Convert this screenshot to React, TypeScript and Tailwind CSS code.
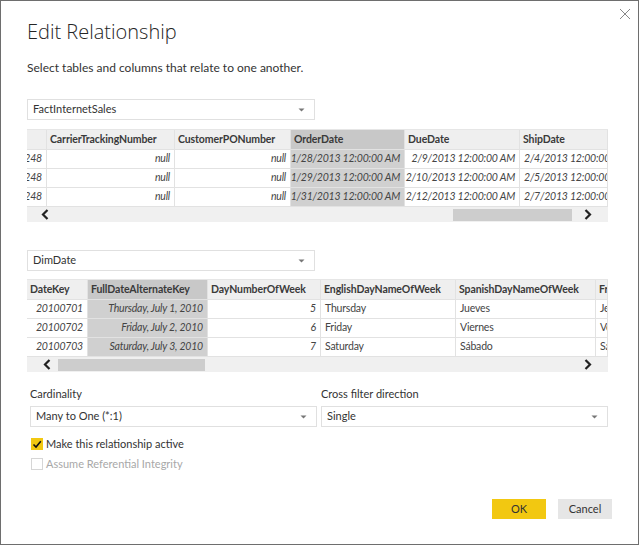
import React from 'react'

const ui = { fontFamily: 'Lato, "Open Sans", sans-serif' }
const titleFont = { fontFamily: '"Open Sans", "Noto Sans", sans-serif' }
const grid = { fontFamily: 'Lato, "Liberation Sans", sans-serif' }

type Col = { name: string; width: number; align: 'left' | 'right'; selected?: boolean }

const factCols: Col[] = [
  { name: '', width: 20, align: 'right' },
  { name: 'CarrierTrackingNumber', width: 128, align: 'right' },
  { name: 'CustomerPONumber', width: 116, align: 'right' },
  { name: 'OrderDate', width: 114, align: 'right', selected: true },
  { name: 'DueDate', width: 115, align: 'right' },
  { name: 'ShipDate', width: 88, align: 'left' },
]

const factRows = [
  ['86.2248', 'null', 'null', '1/28/2013 12:00:00 AM', '2/9/2013 12:00:00 AM', '2/4/2013 12:00:00 AM'],
  ['86.2248', 'null', 'null', '1/29/2013 12:00:00 AM', '2/10/2013 12:00:00 AM', '2/5/2013 12:00:00 AM'],
  ['86.2248', 'null', 'null', '1/31/2013 12:00:00 AM', '2/12/2013 12:00:00 AM', '2/7/2013 12:00:00 AM'],
]

const dateCols: Col[] = [
  { name: 'DateKey', width: 61, align: 'right' },
  { name: 'FullDateAlternateKey', width: 120, align: 'right', selected: true },
  { name: 'DayNumberOfWeek', width: 113, align: 'right' },
  { name: 'EnglishDayNameOfWeek', width: 135, align: 'left' },
  { name: 'SpanishDayNameOfWeek', width: 140, align: 'left' },
  { name: 'FrenchDayNameOfWeek', width: 12, align: 'left' },
]

const dateRows = [
  ['20100701', 'Thursday, July 1, 2010', '5', 'Thursday', 'Jueves', 'Jeudi'],
  ['20100702', 'Friday, July 2, 2010', '6', 'Friday', 'Viernes', 'Vendredi'],
  ['20100703', 'Saturday, July 3, 2010', '7', 'Saturday', 'Sábado', 'Samedi'],
]

// italic = numbers / dates (typed values), plain = text columns
const italicCols = { fact: [true, true, true, true, true, true], date: [true, true, true, false, false, false] }

const Caret = () => (
  <svg width="7" height="4" viewBox="0 0 7 4">
    <path d="M0.5 0.5 L6.5 0.5 L3.5 3.5 Z" fill="#777" />
  </svg>
)

const Chevron = ({ dir }: { dir: 'left' | 'right' }) => (
  <svg width="8" height="11" viewBox="0 0 8 11">
    <path
      d={dir === 'left' ? 'M6.5 1 L2 5.5 L6.5 10' : 'M1.5 1 L6 5.5 L1.5 10'}
      fill="none"
      stroke="#222"
      strokeWidth="2.2"
    />
  </svg>
)

const Dropdown = ({ value, width }: { value: string; width: number }) => (
  <div
    className="h-[21px] border border-[#e0e0e0] bg-white flex items-center justify-between pl-[5px] pr-[9px] text-[11px] text-[#333]"
    style={{ width }}
  >
    <span>{value}</span>
    <Caret />
  </div>
)

const Preview = ({
  cols,
  rows,
  italics,
  thumb,
  leftArrow,
}: {
  cols: Col[]
  rows: string[][]
  italics: boolean[]
  thumb: [number, number]
  leftArrow: number
}) => (
  <div className="w-[581px] border-t border-[#e6e6e6]" style={grid}>
    <div className="flex h-[19px] bg-[#efefef]">
      {cols.map((c, i) => (
        <div
          key={i}
          className={`shrink-0 overflow-hidden whitespace-nowrap flex items-center px-[3px] text-[10.5px] tracking-[-0.1px] font-bold text-[#3a3a3a] border-r border-[#e2e2e2] ${c.selected ? 'bg-[#c8c8c8]' : ''}`}
          style={{ width: c.width }}
        >
          {c.name}
        </div>
      ))}
    </div>
    {rows.map((r, ri) => (
      <div key={ri} className="flex h-[19px] border-t border-[#e2e2e2]">
        {r.map((v, ci) => {
          const c = cols[ci]
          return (
            <div
              key={ci}
              className={`shrink-0 overflow-hidden whitespace-nowrap flex items-center px-[4px] text-[10.5px] tracking-[-0.2px] text-[#444] border-r border-[#e2e2e2] ${c.align === 'right' ? 'justify-end' : 'justify-start'} ${italics[ci] ? 'italic' : ''} ${c.selected ? 'bg-[#d0d0d0]' : 'bg-white'}`}
              style={{ width: c.width }}
            >
              {v}
            </div>
          )
        })}
      </div>
    ))}
    <div className="relative h-[16px] bg-[#f0f0f0] border-t border-[#e2e2e2]">
      <div className="absolute top-[2px] bottom-[1px] bg-[#cdcdcd]" style={{ left: thumb[0], width: thumb[1] }} />
      <div className="absolute top-[2px]" style={{ left: leftArrow }}>
        <Chevron dir="left" />
      </div>
      <div className="absolute top-[2px] right-[16px]">
        <Chevron dir="right" />
      </div>
    </div>
  </div>
)

const Checkbox = ({ checked, disabled }: { checked?: boolean; disabled?: boolean }) =>
  checked ? (
    <div className="w-[12px] h-[12px] bg-[#f2c811] flex items-center justify-center">
      <svg width="10" height="9" viewBox="0 0 10 9">
        <path d="M1.5 4.5 L4 7 L8.8 1.2" fill="none" stroke="#111" strokeWidth="1.6" />
      </svg>
    </div>
  ) : (
    <div className={`w-[12px] h-[12px] border ${disabled ? 'border-[#d6d6d6]' : 'border-[#888]'} bg-white`} />
  )

export default function App() {
  return (
    <div className="w-[639px] h-[545px] border border-[#6e6e6e] bg-white relative text-[#333]" style={ui}>
      {/* close */}
      <div className="absolute top-[7px] right-[7px]">
        <svg width="12" height="12" viewBox="0 0 12 12">
          <path d="M1 1 L11 11 M11 1 L1 11" stroke="#888" strokeWidth="1" />
        </svg>
      </div>

      <div className="pl-[26px] flex flex-col">
        <h1 className="mt-[16px] h-[30px] text-[20px] leading-[30px] font-light text-[#252525]" style={titleFont}>
          Edit Relationship
        </h1>
        <p className="mt-[13px] text-[12px] leading-[16px] text-[#333]">Select tables and columns that relate to one another.</p>

        <div className="mt-[23px]">
          <Dropdown value="FactInternetSales" width={288} />
        </div>
        <div className="mt-[9px]">
          <Preview cols={factCols} rows={factRows} italics={italicCols.fact} thumb={[426, 119]} leftArrow={14} />
        </div>

        <div className="mt-[28px]">
          <Dropdown value="DimDate" width={288} />
        </div>
        <div className="mt-[8px]">
          <Preview cols={dateCols} rows={dateRows} italics={italicCols.date} thumb={[31, 147]} leftArrow={16} />
        </div>

        <div className="mt-[14px] pl-[3px] flex gap-[4px]">
          <div className="flex flex-col">
            <div className="text-[11px] leading-[16px] text-[#333]">Cardinality</div>
            <div className="mt-[4px]">
              <Dropdown value="Many to One (*:1)" width={287} />
            </div>
          </div>
          <div className="flex flex-col">
            <div className="text-[11px] leading-[16px] text-[#333]">Cross filter direction</div>
            <div className="mt-[4px]">
              <Dropdown value="Single" width={287} />
            </div>
          </div>
        </div>

        <div className="mt-[10px] pl-[4px] flex items-center gap-[3px] h-[14px] text-[11px] text-[#333]">
          <Checkbox checked />
          <span>Make this relationship active</span>
        </div>
        <div className="mt-[6px] pl-[4px] flex items-center gap-[3px] h-[14px] text-[11px] text-[#a8a8a8]">
          <Checkbox disabled />
          <span>Assume Referential Integrity</span>
        </div>

        <div className="mt-[28px] pr-[26px] flex justify-end gap-[12px]">
          <button className="w-[54px] h-[20px] bg-[#f2c811] text-[11px] text-[#333]">OK</button>
          <button className="w-[54px] h-[20px] bg-[#e6e6e6] text-[11px] text-[#333]">Cancel</button>
        </div>
      </div>
    </div>
  )
}
